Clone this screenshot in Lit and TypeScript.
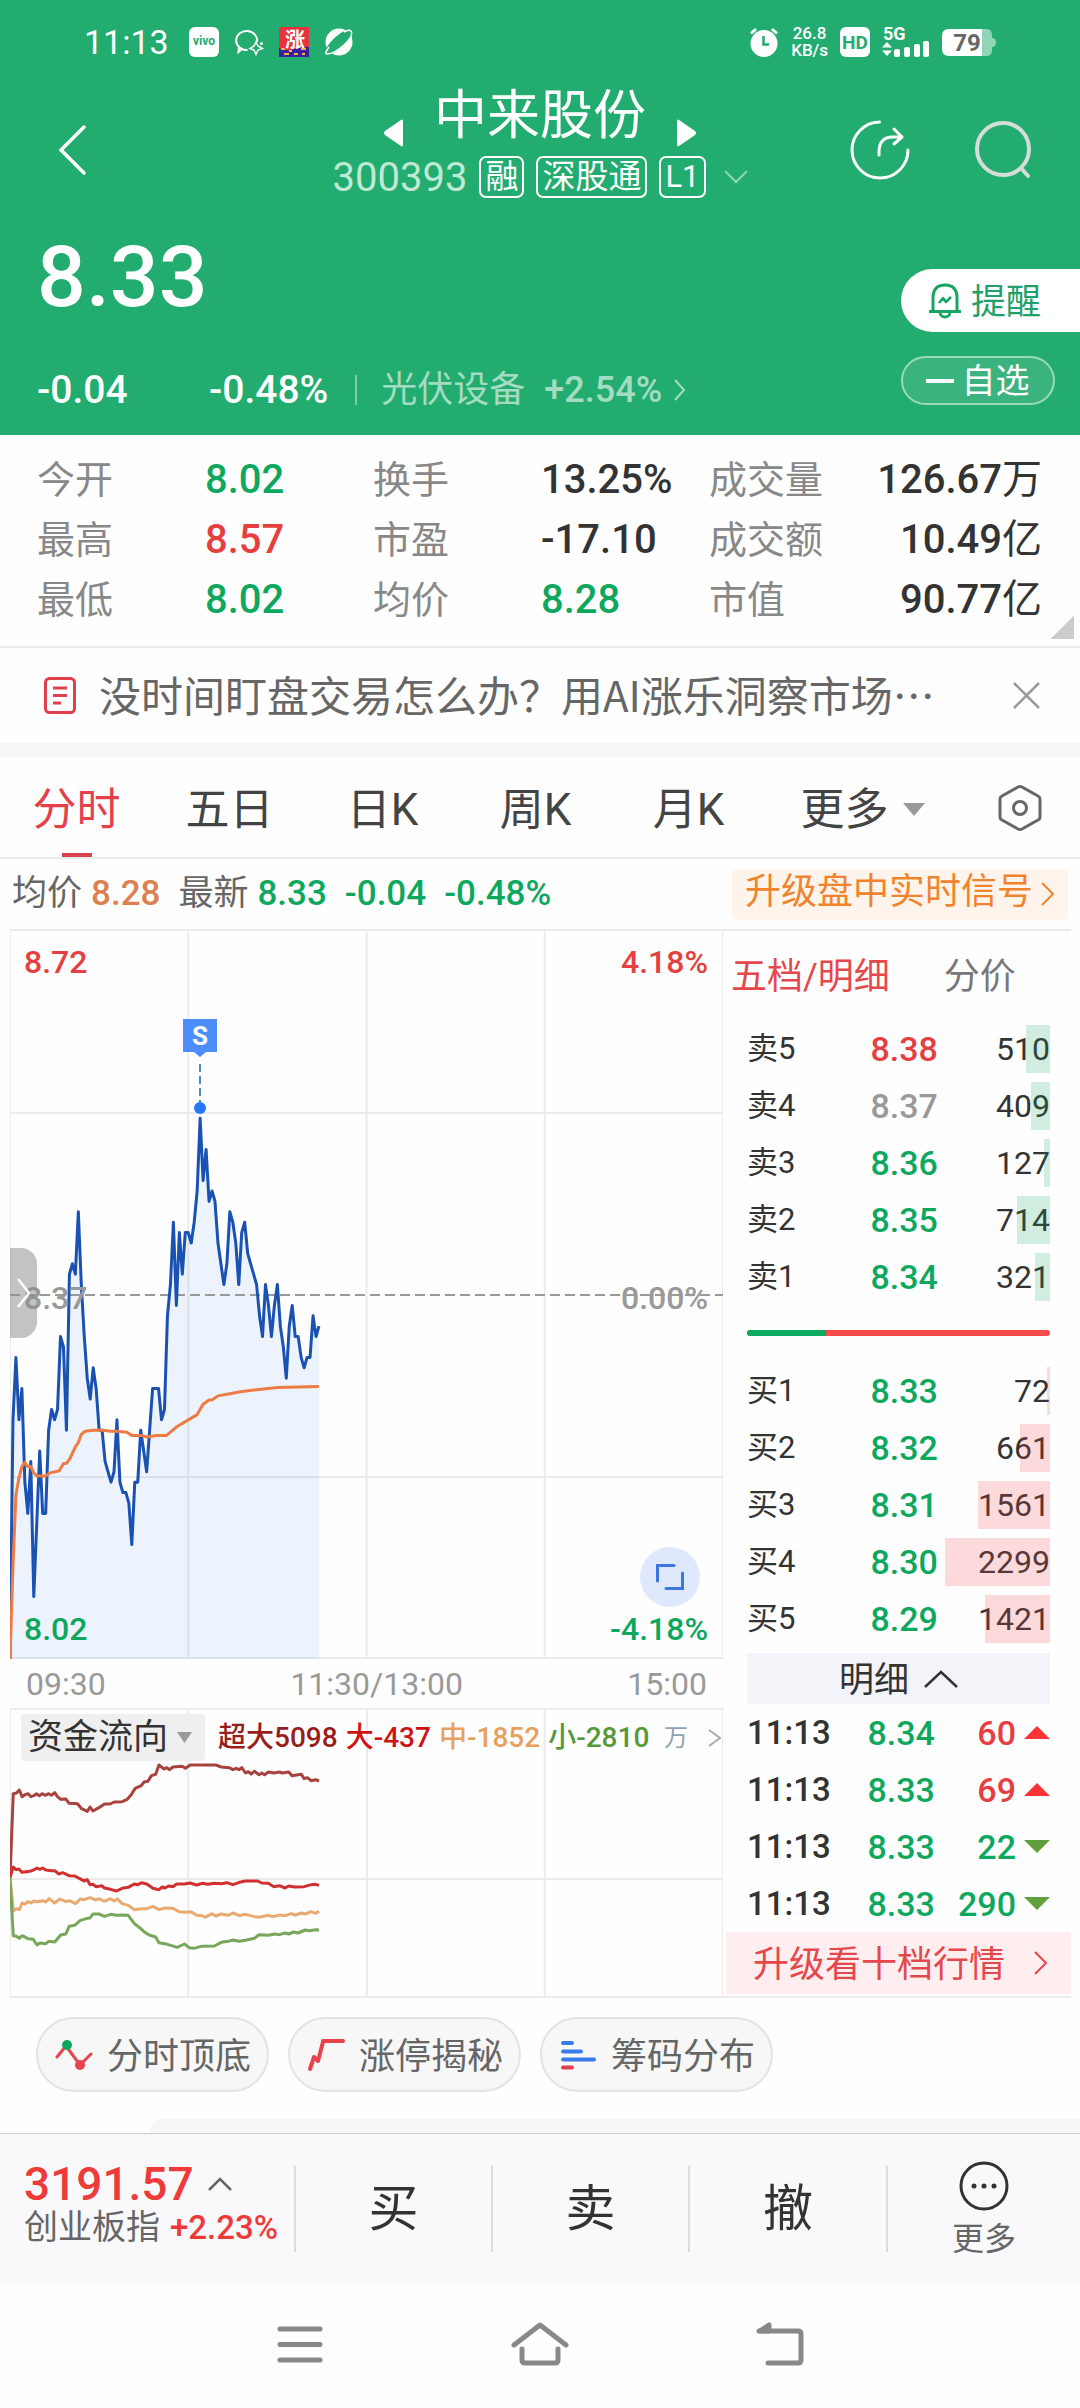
import { LitElement, html, css, svg } from "lit";
import { customElement, state } from "lit/decorators.js";
import { classMap } from "lit/directives/class-map.js";

const base = css`
  * {
    box-sizing: border-box;
  }
  :host {
    display: block;
    font-family: Roboto, "Noto Sans CJK SC", sans-serif;
    color: #333;
  }
  button {
    font: inherit;
    color: inherit;
    background: none;
    border: 0;
    padding: 0;
    margin: 0;
    text-align: inherit;
    cursor: pointer;
  }
  svg {
    display: block;
    flex: none;
  }
  .lift {
    padding-bottom: 4px;
  }
  .up {
    color: #e5403f;
  }
  .down {
    color: #0ea75e;
  }
  .flat {
    color: #999;
  }
`;

const GRID = "#ebebeb";

/** Price of each minute since the opening, in cents from the previous close. */
const PRICES = [
  -35, -12, -6, -12, -9, -18, -21, -16, -29, -22, -15, -21, -21, -13, -11, -12, -11, -4, -5, -13,
  2, 3, 2, 8, 1, -4, -8, -10, -7, -9, -13, -13, -16, -17, -18, -17, -12, -18, -19, -19,
  -20, -24, -18, -18, -13, -15, -17, -13, -9, -9, -9, -12, -11, -2, 1, 7, -1, 6, 2, 6,
  6, 5, 7, 10, 17, 11, 14, 9, 10, 9, 5, 3, 1, 3, 8, 7, 5, 1, 6, 7,
  4, 3, 2, 1, -2, -4, 1, -1, -4, -1, 1, -3, -5, -8, -3, -1, -4, -4, -6, -7,
  -6, -6, -2, -4, -3,
];

/** Average price as [minute, cents from the previous close]. */
const AVERAGE: [number, number][] = [
  [0, -35], [1, -26], [2, -19.2], [3, -17.6], [4, -16.5], [5, -16.1], [6, -16.5], [7, -16.5],
  [8, -17.1], [9, -17.4], [12, -17.4], [13.5, -17.1], [16.6, -16.9], [18, -16.2], [19, -16.2],
  [20.2, -15.7], [22, -14.6], [23, -14.2], [24, -13.4], [25.3, -13.1], [28, -13], [31.5, -13],
  [33.7, -13.1], [36, -13.1], [39.3, -13.2], [41, -13.5], [44.3, -13.5], [46, -13.65],
  [49.4, -13.5], [52.7, -13.5], [56, -12.7], [63, -11.5], [65, -10.5], [67, -10.1], [68, -10.1],
  [70, -9.7], [74, -9.5], [77.5, -9.3], [83, -9.1], [90, -8.9], [104, -8.8],
];

const points = (list: [number, number][]) => list.map(([m, c]) => `${m},${35 - c}`).join(" ");

@customElement("price-chart")
class PriceChart extends LitElement {
  static styles = [
    base,
    css`
      :host {
        position: relative;
      }
      .plot {
        width: 100%;
        height: 728px;
      }
      .plot * {
        vector-effect: non-scaling-stroke;
      }
      .label {
        position: absolute;
        font-size: 32px;
        line-height: 36px;
        font-weight: 500;
      }
      .left {
        left: 14px;
      }
      .right {
        right: 15px;
      }
      .top {
        top: 13px;
      }
      .middle {
        top: 349px;
      }
      .bottom {
        bottom: 12px;
      }
      .signal {
        position: absolute;
        left: 26.67%;
        top: 88px;
        transform: translateX(-50%);
      }
      .handle {
        position: absolute;
        left: 0;
        top: 317px;
        width: 27px;
        height: 90px;
        border-radius: 0 16px 16px 0;
        background: rgba(140, 140, 140, 0.52);
        display: flex;
        align-items: center;
        justify-content: center;
      }
      .expand {
        position: absolute;
        right: 23px;
        bottom: 52px;
        width: 60px;
        height: 60px;
        border-radius: 50%;
        background: #dfe8fc;
        display: flex;
        align-items: center;
        justify-content: center;
      }
    `,
  ];

  render() {
    const line = PRICES.map((c, m): [number, number] => [m, c]);
    return html`
      <svg class="plot" viewBox="0 0 240 70" preserveAspectRatio="none" role="img" aria-label="分时走势">
        <g stroke=${GRID} stroke-width="2" fill="none">
          <path d="M0 0V70M60 0V70M120 0V70M180 0V70M240 0V70M0 17.500H240M0 52.500H240M0 69.900H240" />
        </g>
        <polygon points="0,70 ${points(line)} 104,70" fill="rgba(70,130,235,.09)" />
        <path d="M0 35H240" stroke="#999" stroke-width="2" stroke-dasharray="10 5" />
        <polyline points=${points(line)} fill="none" stroke="#1a52b3" stroke-width="3" stroke-linejoin="round" />
        <polyline points=${points(AVERAGE)} fill="none" stroke="#ee7b44" stroke-width="3" stroke-linejoin="round" />
      </svg>
      <span class="label left top up">8.72</span>
      <span class="label right top up">4.18%</span>
      <span class="label left middle flat">8.37</span>
      <span class="label right middle flat">0.00%</span>
      <span class="label left bottom down">8.02</span>
      <span class="label right bottom down">-4.18%</span>
      <svg class="signal" width="34" height="96" viewBox="0 0 34 96">
        <path d="M0 0H34V33H23L17 38L11 33H0Z" fill="#4d8dfb" />
        <text x="17" y="26" text-anchor="middle" font-size="26" font-weight="700" fill="#fff">S</text>
        <path d="M17 45V84" stroke="#4b8cc0" stroke-width="2" stroke-dasharray="8 4" />
        <circle cx="17" cy="89" r="6" fill="#2478f5" />
      </svg>
      <button class="handle" aria-label="展开侧栏">
        <svg width="14" height="30" viewBox="0 0 14 30" fill="none" stroke="#fff" stroke-width="2.5">
          <path d="M1 1L12 15L1 29" />
        </svg>
      </button>
      <button class="expand" aria-label="全屏">
        <svg width="30" height="28" viewBox="0 0 30 28" fill="none" stroke="#3a78de" stroke-width="3">
          <path d="M2.500 18V2.500H19M11 25.500H27.500V10" stroke-linecap="round" />
        </svg>
      </button>
    `;
  }
}

const FLOWS = [
  {
    color: "#a8423f",
    points:
      "21,710 28,458 35,456 41,447 47,467 53,461 60,458 66,467 72,464 78,458 84,464 90,458 97,463 104,458 110,463 117,455 123,467 130,475 141,474 148,487 166,488 175,503 187,511 193,498 199,510 212,500 224,489 236,489 245,483 262,482 273,475 281,462 290,442 303,434 309,423 317,421 325,404 334,400 341,372 352,384 358,380 364,386 371,378 391,376 398,382 408,372 463,372 475,378 492,380 500,386 507,382 513,386 519,380 527,396 533,392 539,399 546,391 556,401 562,396 568,401 576,393 588,396 600,393 606,396 620,393 627,404 647,400 653,413 660,410 668,419 678,416 685,420",
  },
  {
    color: "#d0302f",
    points:
      "21,710 28,678 34,686 40,684 47,694 56,692 66,690 73,686 79,681 85,685 91,681 98,687 110,689 117,689 126,699 134,695 148,704 160,705 170,712 180,720 187,716 193,731 199,730 206,737 218,734 224,741 237,745 250,750 262,742 275,739 288,729 296,731 303,725 315,729 328,742 341,746 348,738 354,741 362,735 371,737 379,729 396,729 408,726 422,732 434,727 446,730 460,727 475,728 487,725 500,731 514,724 527,720 553,720 562,726 576,727 588,737 600,734 612,741 620,735 632,738 653,737 668,731 678,730 685,733",
  },
  {
    color: "#eaa96f",
    points:
      "21,710 28,810 35,803 41,806 47,786 53,789 60,782 66,786 72,780 79,782 91,779 98,783 105,773 117,786 128,774 141,782 148,779 162,788 172,774 180,776 193,770 206,777 212,773 224,781 237,773 245,780 252,774 262,788 275,793 288,806 303,803 315,803 328,796 341,806 354,801 371,802 384,812 396,814 410,812 422,823 434,824 440,829 455,818 463,825 475,819 490,823 500,816 514,824 527,820 546,827 556,829 576,823 586,827 600,822 612,824 625,818 634,822 647,816 655,819 668,812 678,817 685,811",
  },
  {
    color: "#78a65a",
    points:
      "21,710 28,884 35,886 41,892 47,884 60,893 71,895 79,912 85,906 98,908 104,901 117,903 130,882 141,879 148,856 160,853 172,838 187,832 193,831 199,819 212,819 224,826 237,820 250,823 262,822 275,823 288,847 303,864 309,872 320,882 334,888 341,905 354,908 368,914 380,919 396,909 406,920 416,922 432,916 460,915 475,904 490,901 500,897 514,901 527,898 546,892 556,881 576,883 590,879 600,881 612,876 620,879 630,873 640,876 655,867 664,869 678,866 685,867",
  },
];

@customElement("flow-chart")
class FlowChart extends LitElement {
  static styles = [
    base,
    css`
      :host {
        position: relative;
      }
      .plot {
        width: 100%;
        height: 288px;
      }
      .plot * {
        vector-effect: non-scaling-stroke;
      }
      .legend {
        position: absolute;
        left: 11px;
        right: 0;
        top: 6px;
        height: 47px;
        display: flex;
        align-items: center;
        font-size: 28px;
        line-height: 36px;
        white-space: nowrap;
      }
      .picker {
        height: 47px;
        padding: 0 13px 0 7px;
        border-radius: 4px;
        background: #efefef;
        font-size: 35px;
        display: flex;
        align-items: center;
        gap: 9px;
        margin-right: 13px;
      }
      .items {
        display: flex;
        gap: 8px;
        font-weight: 500;
      }
      .huge {
        color: #981e1c;
      }
      .big {
        color: #cf1212;
      }
      .mid {
        color: #e8a05f;
      }
      .small {
        color: #56983a;
      }
      .more {
        margin-left: auto;
        margin-right: 1px;
        display: flex;
        align-items: center;
        gap: 20px;
        font-size: 24px;
        color: #8ea4b5;
      }
    `,
  ];

  render() {
    return html`
      <svg class="plot" viewBox="21 201 1532 864" preserveAspectRatio="none" role="img" aria-label="资金流向">
        <path d="M21 203H1553M21 714H1553M21 201V1065M404 201V1065M788 201V1065M1170 201V1065M1553 201V1065"
          stroke=${GRID} stroke-width="2" fill="none" />
        ${FLOWS.map(
          (f) => svg`<polyline points=${f.points} fill="none" stroke=${f.color} stroke-width="3" stroke-linejoin="round" />`
        )}
      </svg>
      <div class="legend">
        <button class="picker">
          资金流向
          <svg width="15" height="11" viewBox="0 0 15 11"><path d="M0 0H15L7.500 11Z" fill="#999" /></svg>
        </button>
        <div class="items">
          <span class="huge">超大5098</span><span class="big">大-437</span>
          <span class="mid">中-1852</span><span class="small">小-2810</span>
        </div>
        <button class="more">
          万
          <svg width="14" height="18" viewBox="0 0 14 18" fill="none" stroke="#aaa" stroke-width="2">
            <path d="M1 1L12 9L1 17" />
          </svg>
        </button>
      </div>
    `;
  }
}

interface Level {
  name: string;
  price: string;
  tone: string;
  qty: number;
}

const SELLS: Level[] = [
  { name: "卖5", price: "8.38", tone: "up", qty: 510 },
  { name: "卖4", price: "8.37", tone: "flat", qty: 409 },
  { name: "卖3", price: "8.36", tone: "down", qty: 127 },
  { name: "卖2", price: "8.35", tone: "down", qty: 714 },
  { name: "卖1", price: "8.34", tone: "down", qty: 321 },
];
const BUYS: Level[] = [
  { name: "买1", price: "8.33", tone: "down", qty: 72 },
  { name: "买2", price: "8.32", tone: "down", qty: 661 },
  { name: "买3", price: "8.31", tone: "down", qty: 1561 },
  { name: "买4", price: "8.30", tone: "down", qty: 2299 },
  { name: "买5", price: "8.29", tone: "down", qty: 1421 },
];
const TRADES = [
  { time: "11:13", price: "8.34", qty: 60, rise: true },
  { time: "11:13", price: "8.33", qty: 69, rise: true },
  { time: "11:13", price: "8.33", qty: 22, rise: false },
  { time: "11:13", price: "8.33", qty: 290, rise: false },
];
const LARGEST = 2299;

@customElement("order-book")
class OrderBook extends LitElement {
  static styles = [
    base,
    css`
      .tabs {
        display: flex;
        gap: 54px;
        padding: 4px 0 1px 5px;
        line-height: 84px;
        font-size: 36px;
        white-space: nowrap;
      }
      .tab {
        color: #777;
      }
      .tab.on {
        color: #e5484c;
      }
      .body {
        padding: 0 21px;
      }
      table {
        width: 100%;
        border-collapse: collapse;
        table-layout: fixed;
      }
      th,
      td {
        height: 57px;
        padding: 0;
        line-height: 40px;
        vertical-align: middle;
        text-align: right;
        font-weight: 500;
      }
      th {
        text-align: left;
      }
      .name {
        width: 24%;
        font-size: 31px;
        font-weight: 400;
      }
      .price {
        width: 39%;
        font-size: 34px;
      }
      .qty {
        position: relative;
        font-size: 32px;
        font-weight: 400;
      }
      .bar {
        position: absolute;
        right: 0;
        top: 5px;
        height: 48px;
        background: rgba(14, 167, 94, 0.19);
      }
      .buy .bar {
        background: rgba(245, 70, 80, 0.2);
      }
      .ratio {
        display: flex;
        height: 6px;
        margin: 25px 0 26px;
        border-radius: 3px;
        overflow: hidden;
        background: #fb4a4a;
      }
      .asks {
        background: #0aab60;
      }
      .toggle {
        width: 100%;
        height: 51px;
        margin-top: 6px;
        background: #f3f4f9;
        display: flex;
        align-items: center;
        justify-content: center;
        gap: 15px;
        font-size: 35px;
      }
      .time {
        width: 30%;
        font-size: 33px;
      }
      .deal {
        width: 32%;
        font-size: 34px;
      }
      .amount {
        font-size: 34px;
      }
      .amount div {
        display: flex;
        justify-content: flex-end;
        align-items: center;
        gap: 8px;
      }
      .upgrade {
        width: 100%;
        height: 62px;
        padding: 0 23px 0 27px;
        background: #feeef0;
        color: #e5484c;
        font-size: 36px;
        display: flex;
        align-items: center;
        justify-content: space-between;
      }
    `,
  ];

  private levels(kind: string, rows: Level[]) {
    return html`<table class=${kind} aria-label=${kind === "buy" ? "买盘" : "卖盘"}>
      ${rows.map(
        (r) => html`<tr>
          <th class="name" scope="row">${r.name}</th>
          <td class="price ${r.tone}">${r.price}</td>
          <td class="qty">${r.qty}<span class="bar" style="width:${Math.round((r.qty / LARGEST) * 94)}%"></span></td>
        </tr>`
      )}
    </table>`;
  }

  render() {
    return html`
      <div class="tabs" role="tablist">
        <button class="tab on" role="tab" aria-selected="true">五档/明细</button>
        <button class="tab" role="tab" aria-selected="false">分价</button>
      </div>
      <div class="body">
        ${this.levels("sell", SELLS)}
        <div class="ratio"><div class="asks" style="width:26%"></div></div>
        ${this.levels("buy", BUYS)}
        <button class="toggle">
          <span class="lift">明细</span>
          <svg width="34" height="18" viewBox="0 0 34 18" fill="none" stroke="#333" stroke-width="2.5">
            <path d="M1 17L17 2L33 17" />
          </svg>
        </button>
        <table aria-label="成交明细">
          ${TRADES.map(
            (t) => html`<tr>
              <th class="time" scope="row">${t.time}</th>
              <td class="deal down">${t.price}</td>
              <td class="amount ${t.rise ? "up" : "down"}">
                <div>
                  ${t.qty}
                  <svg width="26" height="13" viewBox="0 0 26 13">
                    <path d=${t.rise ? "M0 13L13 0L26 13Z" : "M0 0H26L13 13Z"} fill=${t.rise ? "#fb3535" : "#5f9f3c"} />
                  </svg>
                </div>
              </td>
            </tr>`
          )}
        </table>
      </div>
      <button class="upgrade">
        <span class="lift">升级看十档行情</span>
        <svg width="14" height="24" viewBox="0 0 14 24" fill="none" stroke="#e5484c" stroke-width="2">
          <path d="M1 1L12 12L1 23" />
        </svg>
      </button>
    `;
  }
}

@customElement("status-bar")
class StatusBar extends LitElement {
  static styles = [
    base,
    css`
      :host {
        color: #fff;
      }
      .bar {
        height: 84px;
        padding: 0 84px 0 84px;
        display: flex;
        align-items: center;
        justify-content: space-between;
      }
      .side {
        display: flex;
        align-items: center;
        gap: 15px;
      }
      .right {
        gap: 12px;
      }
      .clock {
        font-size: 34px;
        line-height: 40px;
        padding-right: 5px;
      }
      .rate {
        display: grid;
        font-size: 17px;
        line-height: 17px;
        font-weight: 500;
        text-align: center;
      }
    `,
  ];

  render() {
    return html`
      <div class="bar">
        <div class="side">
          <span class="clock">11:13</span>
          <svg width="30" height="30" viewBox="0 0 30 30">
            <rect width="30" height="30" rx="6" fill="#fff" />
            <text x="15" y="18" text-anchor="middle" font-size="12" font-weight="700" fill="#22ac6f">vivo</text>
          </svg>
          <svg width="30" height="30" viewBox="0 0 30 30" fill="none" stroke="#fff" stroke-width="2">
            <path d="M23 15A10.500 9.500 0 1 0 13.500 23Q9 23 8 22L4.500 25L5 19.500" />
            <path d="M22 15L24 19L28.500 21.500L24 23L22 27.500L20 23L16 21.500L20 19Z" stroke-width="1.500" />
            <circle cx="27.500" cy="16.500" r="1.500" fill="#fff" stroke="none" />
          </svg>
          <svg width="30" height="30" viewBox="0 0 30 30">
            <rect width="30" height="30" fill="#e8323c" />
            <path d="M0 21Q8 25 15 22T30 20V30H0Z" fill="#3a1f9e" />
            <text x="16" y="20" text-anchor="middle" font-size="20" font-weight="700" fill="#fff">涨</text>
            <path d="M2 22H6M10 24H13M22 22H27M5 27H10M15 27H19M23 27H26" stroke="#f7b23c" stroke-width="2" />
          </svg>
          <svg width="30" height="30" viewBox="0 0 30 30">
            <circle cx="15" cy="15" r="13.500" fill="#fff" />
            <ellipse cx="15" cy="15" rx="18" ry="6" transform="rotate(-42 15 15)" fill="#22ac6f" />
            <path d="M5 20Q0 27 3 27Q10 27 20 18T27 4Q25 2 20 5" fill="none" stroke="#fff" stroke-width="1.500" />
          </svg>
        </div>
        <div class="side right">
          <svg width="30" height="30" viewBox="0 0 30 30">
            <circle cx="15" cy="16.500" r="13.500" fill="#fff" />
            <path d="M2 6.500L7 2M28 6.500L23 2" stroke="#fff" stroke-width="3" />
            <path d="M14.500 9V17.500H20" fill="none" stroke="#22ac6f" stroke-width="2.500" />
          </svg>
          <div class="rate"><span>26.8</span><span>KB/s</span></div>
          <svg width="30" height="30" viewBox="0 0 30 30">
            <rect width="30" height="30" rx="6" fill="#fff" />
            <text x="15" y="22" text-anchor="middle" font-size="19" font-weight="700" fill="#22ac6f">HD</text>
          </svg>
          <svg width="48" height="42" viewBox="0 -6 48 42" fill="#fff">
            <text x="1" y="13" font-size="18" font-weight="700">5G</text>
            <path d="M5 15L10 20.500H0ZM5 29L0 23.500H10Z" />
            <rect x="12" y="22" width="6" height="8" rx="2" />
            <rect x="22" y="20" width="6" height="10" rx="2" />
            <rect x="32" y="17" width="6" height="13" rx="2" />
            <rect x="41" y="14" width="6" height="16" rx="2" />
          </svg>
          <svg width="54" height="27" viewBox="0 0 54 27">
            <path d="M40 0H44Q50 0 50 6V9Q54 9 54 13Q54 18 50 18V21Q50 27 44 27H40Z" fill="#90d5b7" />
            <path d="M7 0H40V27H7Q0 27 0 20V7Q0 0 7 0Z" fill="#fff" />
            <text x="25" y="22" text-anchor="middle" font-size="24" font-weight="700" fill="#666">79</text>
          </svg>
        </div>
      </div>
    `;
  }
}

const STATS = [
  ["今开", "8.02", "", "down"], ["换手", "13.25%", "", ""], ["成交量", "126.67", "万", "end"],
  ["最高", "8.57", "", "up"], ["市盈", "-17.10", "", ""], ["成交额", "10.49", "亿", "end"],
  ["最低", "8.02", "", "down"], ["均价", "8.28", "", "down"], ["市值", "90.77", "亿", "end"],
];

const PERIODS = ["分时", "五日", "日K", "周K", "月K"];

@customElement("app-root")
class AppRoot extends LitElement {
  @state() private period = "分时";

  static styles = [
    base,
    css`
      :host {
        background: #fefefe;
      }
      .header {
        background: #22ac6f;
        color: #fff;
      }
      .nav {
        display: grid;
        grid-template-columns: 1fr auto 1fr;
        align-items: center;
        height: 122px;
      }
      .back {
        padding: 10px 0 0 59px;
      }
      .actions {
        display: flex;
        justify-content: flex-end;
        gap: 64px;
        padding: 10px 48px 0 0;
      }
      .name {
        display: flex;
        justify-content: center;
        align-items: center;
        gap: 31px;
        height: 64px;
      }
      .name h1 {
        margin: 0;
        font-size: 53px;
        line-height: 64px;
        font-weight: 400;
      }
      .name button {
        padding-top: 34px;
      }
      .code {
        display: flex;
        justify-content: center;
        align-items: center;
        gap: 12px;
        height: 58px;
        font-size: 40px;
        color: #bfe9d4;
      }
      .tag {
        height: 42px;
        padding: 0 4px;
        border: 2px solid #fff;
        border-radius: 7px;
        font-size: 33px;
        line-height: 37px;
        color: #fff;
      }
      .latin {
        font-size: 31px;
      }
      .expand {
        margin-left: 6px;
      }
      .quote {
        display: flex;
        justify-content: space-between;
        height: 229px;
        padding: 21px 0 0 37px;
      }
      .last {
        font-size: 86px;
        line-height: 100px;
        font-weight: 500;
      }
      .change {
        display: flex;
        align-items: center;
        margin-top: 38px;
        height: 50px;
        font-size: 39px;
        font-weight: 500;
        line-height: 50px;
      }
      .diff {
        width: 172px;
      }
      .sector {
        display: flex;
        align-items: center;
        gap: 19px;
        margin-left: 27px;
        padding-left: 26px;
        font-size: 36px;
        font-weight: 400;
        color: #a3dcc2;
        background: linear-gradient(#7dcda8, #7dcda8) left center / 2px 30px no-repeat;
      }
      .sector span {
        display: flex;
        align-items: center;
        gap: 12px;
        font-weight: 500;
      }
      .side {
        display: flex;
        flex-direction: column;
        gap: 24px;
        padding-top: 42px;
      }
      .alert {
        display: flex;
        align-items: center;
        gap: 9px;
        height: 63px;
        padding: 0 39px 0 27px;
        border-radius: 32px 0 0 32px;
        background: #fff;
        color: #22a069;
        font-size: 35px;
      }
      .watch {
        display: flex;
        align-items: center;
        justify-content: center;
        gap: 7px;
        height: 49px;
        margin-right: 25px;
        border: 2px solid #9adabb;
        border-radius: 25px;
        background: #3bb37e;
        font-size: 34px;
        line-height: 44px;
      }
      .stats {
        display: grid;
        grid-template-columns: 168fr 168fr 168fr 168fr 120fr 213fr;
        margin: 0;
        padding: 15px 38px 16px 37px;
        line-height: 60px;
        font-size: 40px;
        border-bottom: 2px solid #ebebeb;
        background: linear-gradient(to bottom right, transparent 50%, #ccc 51%) right 6px bottom 7px / 24px 24px no-repeat;
      }
      .stats dt {
        font-size: 38px;
        color: #888;
      }
      .stats dd {
        margin: 0;
        font-weight: 500;
        white-space: nowrap;
      }
      .unit {
        font-weight: 400;
      }
      .end {
        text-align: right;
      }
      .news {
        display: flex;
        align-items: center;
        gap: 23px;
        height: 95px;
        padding: 0 40px 0 44px;
      }
      .news a {
        flex: 1;
        min-width: 0;
        font-family: "Noto Sans CJK SC", sans-serif;
        font-size: 42px;
        line-height: 60px;
        color: #666;
        text-decoration: none;
        white-space: nowrap;
      }
      .band {
        height: 15px;
        background: #f7f7f7;
      }
      .periods {
        display: grid;
        grid-template-columns: repeat(5, 153fr) 195fr 120fr;
        height: 101px;
        border-bottom: 2px solid #ebebeb;
        font-size: 44px;
        color: #444;
      }
      .periods button {
        display: flex;
        align-items: center;
        justify-content: center;
        gap: 14px;
      }
      .periods .on {
        color: #e5404a;
        background: linear-gradient(#d9414d, #d9414d) center bottom / 30px 4px no-repeat;
      }
      .arrow {
        padding-top: 4px;
      }
      .info {
        display: flex;
        align-items: center;
        height: 70px;
        padding: 0 12px 0 12px;
        font-size: 35px;
        line-height: 44px;
        font-weight: 500;
        white-space: nowrap;
        gap: 18px;
      }
      .pair {
        display: flex;
        align-items: baseline;
        gap: 9px;
      }
      .pair i {
        font-style: normal;
        font-weight: 400;
        color: #666;
      }
      .avg {
        color: #dd8050;
      }
      .realtime {
        margin-left: auto;
        height: 51px;
        padding: 0 13px;
        border-radius: 6px;
        background: #fff4ec;
        color: #f0842e;
        font-size: 36px;
        font-weight: 400;
        display: flex;
        align-items: center;
        gap: 8px;
      }
      .board {
        display: grid;
        grid-template-columns: 713fr 345fr;
        gap: 3px;
        margin: 0 9px 0 10px;
        border-top: 2px solid #ebebeb;
        border-bottom: 2px solid #ebebeb;
      }
      .axis {
        display: grid;
        grid-template-columns: 13fr auto 12fr;
        height: 49px;
        padding: 0 16px;
        align-items: center;
        font-size: 32px;
        color: #999;
      }
      .pills {
        display: flex;
        gap: 19px;
        padding: 19px 36px 27px;
      }
      .pill {
        display: flex;
        align-items: center;
        gap: 14px;
        height: 75px;
        padding: 0 16px 0 17px;
        border: 2px solid #e3e3e3;
        border-radius: 38px;
        background: #f7f7f7;
        font-size: 36px;
        color: #666;
        white-space: nowrap;
      }
      .peek {
        height: 14px;
        margin-left: 150px;
        border-radius: 12px 0 0 0;
        background: #f7f7f7;
      }
      .trade {
        display: grid;
        grid-template-columns: 294fr 197fr 197fr 198fr 194fr;
        align-items: center;
        height: 151px;
        border-top: 1px solid #ccc;
        background: #f9f9fc;
      }
      .index {
        padding: 0 0 12px 24px;
        white-space: nowrap;
      }
      .value {
        display: flex;
        align-items: center;
        gap: 14px;
        font-size: 46px;
        line-height: 48px;
        font-weight: 500;
        color: #ee3a38;
      }
      .board-name {
        display: flex;
        align-items: baseline;
        gap: 10px;
        font-size: 34px;
        line-height: 38px;
        color: #666;
      }
      .board-name b {
        font-size: 33px;
        font-weight: 500;
        color: #ee3a38;
      }
      .act {
        height: 86px;
        border-left: 2px solid #dcdcdf;
        text-align: center;
        font-size: 50px;
        line-height: 84px;
      }
      .extra {
        display: flex;
        flex-direction: column;
        align-items: center;
        justify-content: center;
        gap: 9px;
        font-size: 32px;
        line-height: 38px;
        color: #666;
      }
      .system {
        display: flex;
        align-items: center;
        justify-content: space-between;
        height: 126px;
        padding: 0 276px 6px 277px;
      }
    `,
  ];

  render() {
    return html`
      <header class="header">
        <status-bar></status-bar>
        <div class="nav">
          <button class="back" aria-label="返回">
            <svg width="27" height="50" viewBox="0 0 27 50" fill="none" stroke="#fff" stroke-width="3.500" stroke-linecap="round" stroke-linejoin="round">
              <path d="M25 2L2 25L25 48" />
            </svg>
          </button>
          <div>
            <div class="name">
              <button aria-label="上一只">
                <svg width="19" height="28" viewBox="0 0 19 28" fill="#fff"><path d="M19 1Q19 0 17 1L1 12Q-1 14 1 16L17 27Q19 28 19 26Z" /></svg>
              </button>
              <h1>中来股份</h1>
              <button aria-label="下一只">
                <svg width="19" height="28" viewBox="0 0 19 28" fill="#fff"><path d="M0 1Q0 0 2 1L18 12Q20 14 18 16L2 27Q0 28 0 26Z" /></svg>
              </button>
            </div>
            <div class="code">
              300393
              <span class="tag">融</span><span class="tag">深股通</span><span class="tag latin">L1</span>
              <svg class="expand" width="24" height="14" viewBox="0 0 24 14" fill="none" stroke="#8fd6b5" stroke-width="2"><path d="M1 1L12 12L23 1" /></svg>
            </div>
          </div>
          <div class="actions">
            <button aria-label="分享">
              <svg width="60" height="60" viewBox="0 0 60 60" fill="none" stroke="#fff" stroke-width="3" stroke-linecap="round" stroke-linejoin="round">
                <path d="M29.500 2A28 28 0 1 0 58 30" />
                <path d="M29 35V32Q29 17 43 17H52M44 9L52 17L44 24" />
              </svg>
            </button>
            <button aria-label="搜索">
              <svg width="58" height="60" viewBox="0 0 58 60" fill="none" stroke="#d5ddd9" stroke-width="4" stroke-linecap="round">
                <circle cx="29" cy="29" r="26" />
                <path d="M47 48L54 56" />
              </svg>
            </button>
          </div>
        </div>
        <div class="quote">
          <div>
            <div class="last">8.33</div>
            <div class="change">
              <span class="diff">-0.04</span>
              <span>-0.48%</span>
              <button class="sector">
                光伏设备
                <span>+2.54%
                  <svg width="12" height="22" viewBox="0 0 12 22" fill="none" stroke="#a3dcc2" stroke-width="2"><path d="M1 1L10 11L1 21" /></svg>
                </span>
              </button>
            </div>
          </div>
          <div class="side">
            <button class="alert">
              <svg width="34" height="36" viewBox="0 0 34 36" fill="none" stroke="#19a463" stroke-width="3" stroke-linejoin="round">
                <path d="M5 27V15Q5 2 17 2T29 15V27" />
                <path d="M1 28.500H33M12 30Q13 34 17 34T22 30" />
                <path d="M11 20L15 15L18 19L23 14" stroke-width="2.500" />
              </svg>
              <span class="lift">提醒</span>
            </button>
            <button class="watch">
              <svg width="28" height="4" viewBox="0 0 28 4"><rect width="28" height="4" fill="#fff" /></svg>
              自选
            </button>
          </div>
        </div>
      </header>

      <dl class="stats">
        ${STATS.map(([k, v, unit, tone]) => html`<dt>${k}</dt><dd class=${tone}>${v}<span class="unit">${unit}</span></dd>`)}
      </dl>

      <div class="news">
        <svg width="32" height="37" viewBox="0 0 32 37" fill="none" stroke="#e0404c" stroke-width="3">
          <rect x="1.500" y="1.500" width="29" height="34" rx="4" />
          <path d="M9 11H23M9 18.500H23M9 26H17" />
        </svg>
        <a class="lift" href="#news">没时间盯盘交易怎么办？用AI涨乐洞察市场…</a>
        <button aria-label="关闭">
          <svg width="27" height="27" viewBox="0 0 27 27" fill="none" stroke="#999" stroke-width="2.500"><path d="M1 1L26 26M26 1L1 26" /></svg>
        </button>
      </div>
      <div class="band"></div>

      <div class="periods" role="tablist">
        ${PERIODS.map(
          (p) => html`<button
            role="tab"
            class=${classMap({ on: p === this.period })}
            aria-selected=${p === this.period ? "true" : "false"}
            @click=${() => (this.period = p)}
          ><span class="lift">${p}</span></button>`
        )}
        <button>
          <span class="lift">更多</span>
          <span class="arrow"><svg width="22" height="13" viewBox="0 0 22 13"><path d="M0 0H22L11 13Z" fill="#999" /></svg></span>
        </button>
        <button aria-label="设置">
          <svg width="44" height="48" viewBox="0 0 44 48" fill="none" stroke="#666" stroke-width="3" stroke-linejoin="round">
            <path d="M20 3Q22 2 24 3L40 12Q42 13 42 15V33Q42 35 40 36L24 45Q22 46 20 45L4 36Q2 35 2 33V15Q2 13 4 12Z" />
            <circle cx="22" cy="24" r="6.500" />
          </svg>
        </button>
      </div>

      <div class="info">
        <span class="pair"><i>均价</i><span class="avg">8.28</span></span>
        <span class="pair"><i>最新</i><span class="down">8.33</span></span>
        <span class="down">-0.04</span>
        <span class="down">-0.48%</span>
        <button class="realtime">
          <span class="lift">升级盘中实时信号</span>
          <svg width="14" height="24" viewBox="0 0 14 24" fill="none" stroke="#f0842e" stroke-width="2"><path d="M1 1L12 12L1 23" /></svg>
        </button>
      </div>

      <main class="board">
        <div>
          <price-chart></price-chart>
          <div class="axis"><span>09:30</span><span>11:30/13:00</span><span class="end">15:00</span></div>
          <flow-chart></flow-chart>
        </div>
        <order-book></order-book>
      </main>

      <div class="pills">
        <button class="pill">
          <svg width="38" height="32" viewBox="0 0 38 32" fill="none" stroke="#e8434d" stroke-width="3" stroke-linecap="round">
            <path d="M2 18L11 7L25 26L36 15" />
            <circle cx="12" cy="6" r="5" fill="#0ea75e" stroke="none" />
            <circle cx="25" cy="26" r="5" fill="#e8434d" stroke="none" />
          </svg>
          <span class="lift">分时顶底</span>
        </button>
        <button class="pill">
          <svg width="38" height="34" viewBox="0 0 38 34" fill="none" stroke="#e8434d" stroke-width="4" stroke-linecap="round" stroke-linejoin="round">
            <path d="M3 31L7 19L11 23L16 4" />
            <path d="M16 3H36" />
          </svg>
          <span class="lift">涨停揭秘</span>
        </button>
        <button class="pill">
          <svg width="38" height="32" viewBox="0 0 38 32" stroke="#3a7bea" stroke-width="4" stroke-linecap="round">
            <path d="M4 4H13M4 12.500H22M4 20.500H35" />
            <path d="M4 28.500H13" stroke="#e0404c" />
          </svg>
          <span class="lift">筹码分布</span>
        </button>
      </div>
      <div class="peek"></div>

      <div class="trade">
        <button class="index">
          <span class="value">3191.57
            <svg width="24" height="14" viewBox="0 0 24 14" fill="none" stroke="#666" stroke-width="2.500"><path d="M1 13L12 2L23 13" /></svg>
          </span>
          <span class="board-name">创业板指<b>+2.23%</b></span>
        </button>
        <button class="act">买</button>
        <button class="act">卖</button>
        <button class="act">撤</button>
        <button class="act extra">
          <svg width="50" height="50" viewBox="0 0 50 50" fill="#333">
            <circle cx="25" cy="25" r="23" fill="none" stroke="#333" stroke-width="3" />
            <circle cx="15" cy="25" r="2.500" /><circle cx="25" cy="25" r="2.500" /><circle cx="35" cy="25" r="2.500" />
          </svg>
          更多
        </button>
      </div>

      <nav class="system">
        <button aria-label="最近任务">
          <svg width="46" height="37" viewBox="0 0 46 37" stroke="#888" stroke-width="5" stroke-linecap="round"><path d="M3 3H43M3 18.500H43M3 34H43" /></svg>
        </button>
        <button aria-label="主屏幕">
          <svg width="58" height="44" viewBox="0 0 58 44" fill="none" stroke="#888" stroke-width="5" stroke-linecap="round" stroke-linejoin="round">
            <path d="M3 23L29 3L55 23" />
            <path d="M11 27V38Q11 41 14 41H44Q47 41 47 38V27" />
          </svg>
        </button>
        <button aria-label="后退">
          <svg width="48" height="44" viewBox="0 0 48 44" fill="none" stroke="#888" stroke-width="5" stroke-linecap="round" stroke-linejoin="round">
            <path d="M3 9H42Q45 9 45 12V38Q45 41 42 41H12" />
            <path d="M4 9L13 3V9Z" fill="#888" />
          </svg>
        </button>
      </nav>
    `;
  }
}
